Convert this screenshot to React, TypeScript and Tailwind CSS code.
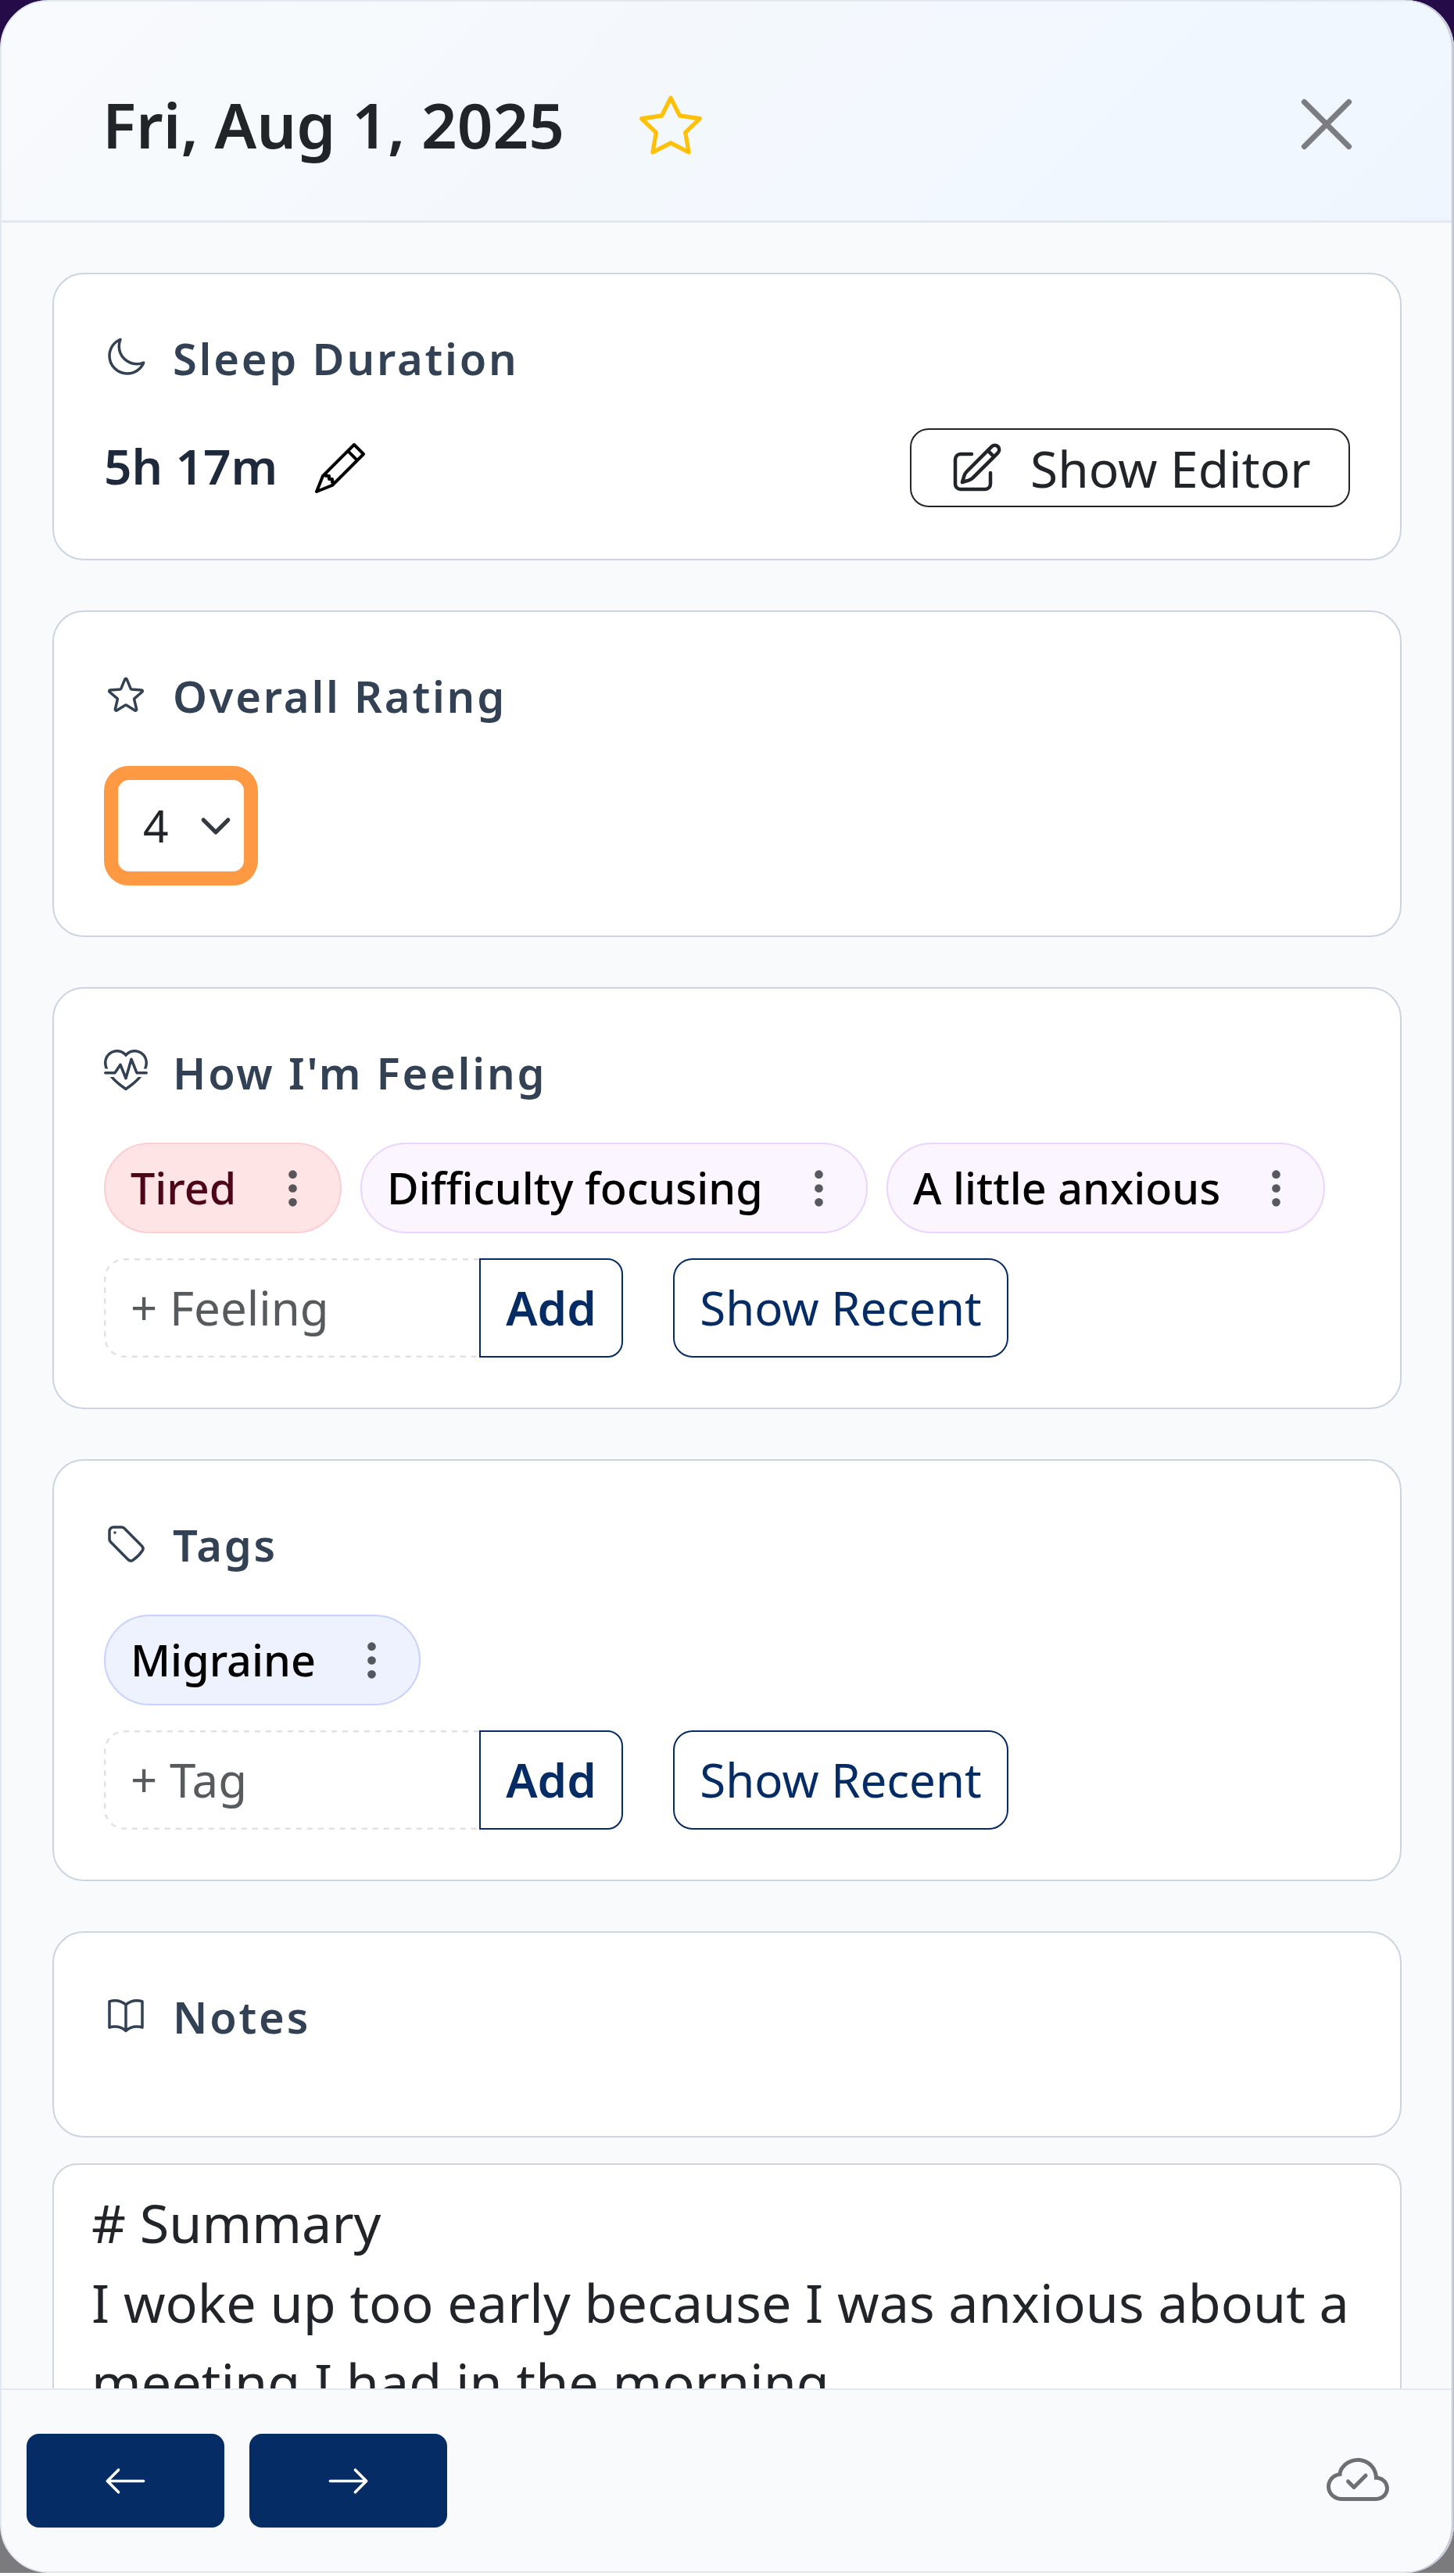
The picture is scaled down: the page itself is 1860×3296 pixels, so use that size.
import type { ReactNode } from "react";
import {
  BsArrowLeft,
  BsArrowRight,
  BsCloudCheck,
  BsHeartPulse,
  BsPencil,
  BsStar,
  BsThreeDotsVertical,
} from "react-icons/bs";
import {
  HiOutlineBookOpen,
  HiOutlineMoon,
  HiOutlinePencilSquare,
  HiOutlineStar,
  HiOutlineTag,
  HiOutlineXMark,
} from "react-icons/hi2";

function Card({ icon, title, className, children }: { icon: ReactNode; title: string; className: string; children?: ReactNode }) {
  return (
    <section className={`shrink-0 rounded-[40px] border-2 border-[#cbd5e1] bg-white px-[64px] pt-[65px] ${className}`}>
      <h2 className="mb-[48px] flex h-[84px] items-center gap-[31px] text-[56px] leading-[84px] font-semibold tracking-[2.8px] whitespace-nowrap text-[#334155]">
        <span className="mb-px size-[57px]">{icon}</span>
        {title}
      </h2>
      {children}
    </section>
  );
}

function Chip({ label, className }: { label: string; className: string }) {
  return (
    <div className={`flex h-[116px] items-center justify-between rounded-full border-2 px-[32px] text-[55.7px] font-medium whitespace-nowrap ${className}`}>
      {label}
      <BsThreeDotsVertical className="size-[57px] text-[#212529] opacity-75" />
    </div>
  );
}

function AddRow({ placeholder }: { placeholder: string }) {
  return (
    <div className="mt-[32px] flex h-[127px] text-[60px] leading-[123px] whitespace-nowrap">
      <div className="relative w-[480px] pt-[2px] pl-[34px] text-[#585b5e]">
        {/* dashed outline, open on the side of the button */}
        <svg viewBox="0 0 480 127" className="absolute inset-0 h-[127px] w-[480px]" fill="none">
          <path
            d="M480 1.2H26A25 25 0 0 0 1.2 26V101A25 25 0 0 0 26 125.8H480"
            stroke="#dee2e6"
            strokeWidth="2.4"
            strokeDasharray="7 7"
          />
        </svg>
        {placeholder}
      </div>
      <button className="w-[184px] rounded-r-[20px] border-2 border-[#052c65] text-center font-semibold text-[#052c65]">Add</button>
      <button className="ml-[64px] w-[429px] rounded-[25px] border-2 border-[#052c65] text-center text-[#052c65]">
        Show Recent
      </button>
    </div>
  );
}

export default function App() {
  return (
    <div className="h-[3296px] w-[1860px] bg-white font-['Noto_Sans',sans-serif]">
      <div className="relative h-[3292px] bg-linear-to-b from-[#250c48] from-[234px] to-[#7b7b7d] to-[234px]">
        <div className="flex h-[3292px] w-[1860px] flex-col overflow-hidden rounded-[62px] border-2 border-[#e2e8f0] bg-[#f8fafc]">
          <header className="flex h-[283px] shrink-0 items-center border-b-[3px] border-[#e2e8f0] bg-linear-135 from-[#f8fafc] to-[#eff6ff] pr-[104px] pl-[129px]">
            <h1 className="pt-[34px] text-[80px] leading-[120px] font-semibold whitespace-nowrap text-[#212529]">Fri, Aug 1, 2025</h1>
            <BsStar className="mt-[36px] ml-[96px] size-[80px] text-[#ffc107]" />
            <HiOutlineXMark className="mt-[33px] ml-auto size-[114px] text-[#7b7d80]" />
          </header>

          <main className="flex min-h-0 flex-1 flex-col gap-[64px] overflow-hidden px-[65px] pt-[64px]">
            <Card icon={<HiOutlineMoon />} title="Sleep Duration" className="h-[368px]">
              <div className="flex h-[101px] items-center">
                <span className="pb-[6px] text-[62.2px] leading-[94px] font-semibold text-[#1e293b]">5h 17m</span>
                <BsPencil className="ml-[48px] size-[64px] text-black" />
                <button className="ml-auto flex h-[101px] w-[563px] items-center rounded-[24px] border-2 border-[#212529] pl-[47px] text-[64px] leading-[97px] whitespace-nowrap text-[#212529]">
                  <HiOutlinePencilSquare className="mr-[33px] size-[72px]" />
                  <span className="pt-px">Show Editor</span>
                </button>
              </div>
            </Card>

            <Card icon={<HiOutlineStar />} title="Overall Rating" className="h-[418px]">
              <div className="flex h-[153px] w-[197px] items-center justify-between rounded-[32px] border-[18px] border-[#fd9843] pr-[15px] pl-[32px] text-[57px] text-[#212529]">
                4
                <svg viewBox="0 0 16 16" className="size-[42px]" fill="none">
                  <path d="m2 5 6 6 6-6" stroke="#343a40" strokeWidth="2" strokeLinecap="round" strokeLinejoin="round" />
                </svg>
              </div>
            </Card>

            <Card icon={<BsHeartPulse />} title="How I'm Feeling" className="h-[540px]">
              <div className="flex gap-[24px]">
                <Chip label="Tired" className="w-[304px] border-[#fecdd3] bg-[#ffe4e6] text-[#4c0519]" />
                <Chip label="Difficulty focusing" className="w-[649px] border-[#e9d5ff] bg-[#faf5ff] text-black" />
                <Chip label="A little anxious" className="w-[561px] border-[#e9d5ff] bg-[#faf5ff] text-black" />
              </div>
              <AddRow placeholder="+ Feeling" />
            </Card>

            <Card icon={<HiOutlineTag />} title="Tags" className="h-[540px]">
              <Chip label="Migraine" className="w-[405px] border-[#c7d2fe] bg-[#eef2ff] text-black" />
              <AddRow placeholder="+ Tag" />
            </Card>

            <div>
              <Card icon={<HiOutlineBookOpen />} title="Notes" className="h-[264px]" />
              <div className="mt-[33px] h-[600px] rounded-[32px] border-2 border-[#d1d5db] bg-white pt-[23px] pl-[48px] text-[68.25px] leading-[102px] whitespace-nowrap text-[#212529]">
                <p># Summary</p>
                <p>I woke up too early because I was anxious about a</p>
                <p>meeting I had in the morning.</p>
              </div>
            </div>
          </main>

          <footer className="flex h-[234px] shrink-0 items-start gap-[32px] border-t-2 border-[#e2e8f0] bg-[#f8fafc] pr-[81px] pl-[32px]">
            <button className="mt-[56px] flex h-[120px] w-[253px] items-center justify-center rounded-[16px] bg-[#052c65] text-white">
              <BsArrowLeft className="size-[57px]" />
            </button>
            <button className="mt-[56px] flex h-[120px] w-[253px] items-center justify-center rounded-[16px] bg-[#052c65] text-white">
              <BsArrowRight className="size-[57px]" />
            </button>
            <BsCloudCheck className="mt-[77px] ml-auto size-[80px] text-[#6d7073]" />
          </footer>
        </div>
        {/* hairlines along the panel's right edge */}
        <div className="pointer-events-none absolute inset-0 rounded-[62px] shadow-[inset_-1px_0_0_#b4b5c6,inset_-2px_0_0_#dfe3ee,inset_-3px_0_0_#b4b7c6]" />
      </div>
    </div>
  );
}
